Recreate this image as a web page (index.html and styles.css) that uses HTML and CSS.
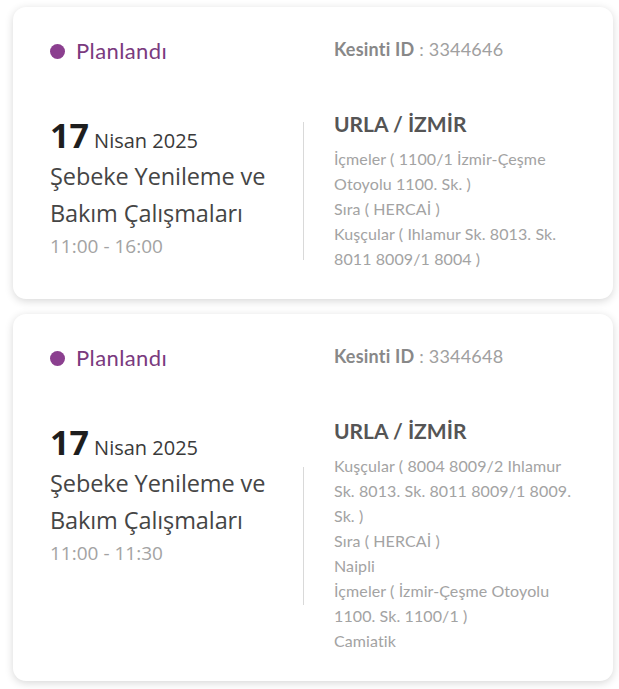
FILE: index.html
```html
<!DOCTYPE html>
<html lang="tr">
<head>
<meta charset="utf-8">
<link rel="stylesheet" href="styles.css">
</head>
<body>
<div class="list">
  <div class="card">
    <div class="head">
      <div class="status"><span class="dot"></span>Planlandı</div>
      <div class="kid"><b>Kesinti ID</b> : 3344646</div>
    </div>
    <div class="row">
      <div class="left">
        <div class="date"><span class="day">17</span> Nisan 2025</div>
        <div class="title">Şebeke Yenileme ve Bakım Çalışmaları</div>
        <div class="time">11:00 - 16:00</div>
      </div>
      <div class="divider"></div>
      <div class="right">
        <div class="city">URLA / İZMİR</div>
        <div class="addr">İçmeler ( 1100/1 İzmir-Çeşme Otoyolu 1100. Sk. )<br>Sıra ( HERCAİ )<br>Kuşçular ( Ihlamur Sk. 8013. Sk. 8011 8009/1 8004 )</div>
      </div>
    </div>
  </div>
  <div class="card">
    <div class="head">
      <div class="status"><span class="dot"></span>Planlandı</div>
      <div class="kid"><b>Kesinti ID</b> : 3344648</div>
    </div>
    <div class="row">
      <div class="left">
        <div class="date"><span class="day">17</span> Nisan 2025</div>
        <div class="title">Şebeke Yenileme ve Bakım Çalışmaları</div>
        <div class="time">11:00 - 11:30</div>
      </div>
      <div class="divider"></div>
      <div class="right">
        <div class="city">URLA / İZMİR</div>
        <div class="addr">Kuşçular ( 8004 8009/2 Ihlamur Sk. 8013. Sk. 8011 8009/1 8009. Sk. )<br>Sıra ( HERCAİ )<br>Naipli<br>İçmeler ( İzmir-Çeşme Otoyolu 1100. Sk. 1100/1 )<br>Camiatik</div>
      </div>
    </div>
  </div>
</div>
</body>
</html>
```
FILE: styles.css
```css
html, body { margin: 0; padding: 0; background: #fff; }
body { font-family: "Open Sans", "Noto Sans", sans-serif; }
.list { display: flex; flex-direction: column; gap: 15px; padding: 7px 6px 8px 13px; }
.card {
  background: #fff;
  border-radius: 13px;
  box-shadow: 0 2px 9px rgba(0,0,0,0.16);
  padding: 30px 35px 28px 37px;
}
.head { display: grid; grid-template-columns: 284px 1fr; align-items: center; }
.status { display: flex; align-items: center; gap: 11px; color: #7a3a7e; font-family: "Lato", sans-serif; font-size: 22px; letter-spacing: 0.4px; line-height: 28px; }
.dot { width: 15px; height: 15px; border-radius: 50%; background: #8b3f8f; }
.kid { font-family: "Lato", sans-serif; font-size: 18px; letter-spacing: 0.2px; color: #a0a0a0; line-height: 26px; margin-top: -4px; }
.kid b { color: #888; font-weight: 700; }
.row { display: grid; grid-template-columns: 253px 1px 1fr; column-gap: 0; margin-top: 44px; }
.right { padding-left: 30px; }
.divider { background: #d9d9d9; height: 138px; align-self: center; margin-top: 2px; }
.left { padding-top: 6px; }
.date { color: #3a3a3a; font-size: 20px; line-height: 40px; }
.day { font-size: 34px; font-weight: 700; color: #1e1e1e; }
.title { color: #454545; font-size: 23.5px; line-height: 37px; margin-top: -3px; letter-spacing: -0.1px; }
.time { color: #a3a3a3; font-size: 19px; line-height: 28px; }
.city { font-family: "Lato", sans-serif; font-weight: 700; font-size: 21px; color: #555; line-height: 30px; margin-bottom: 7px; }
.addr { font-family: "Lato", sans-serif; font-size: 16px; letter-spacing: 0.1px; line-height: 25px; color: #a3a3a3; }
```
